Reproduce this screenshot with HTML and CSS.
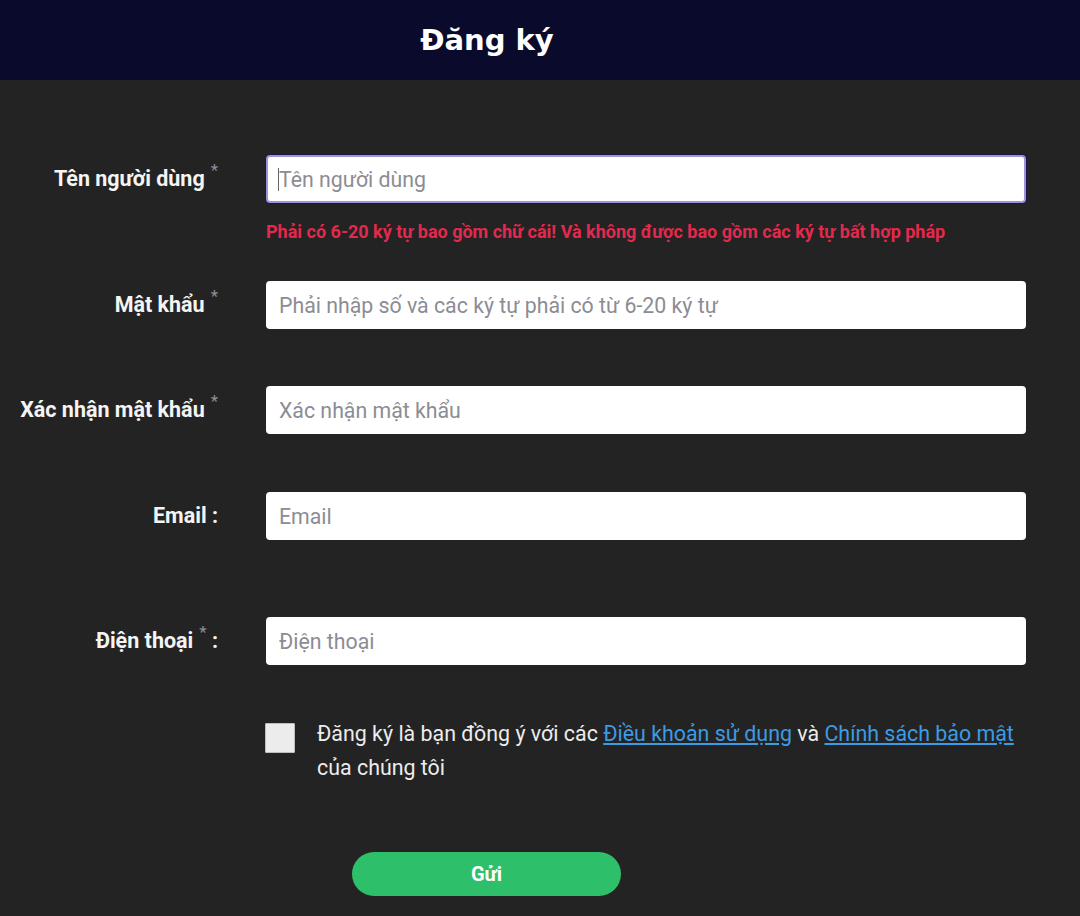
FILE: index.html
```html
<!DOCTYPE html>
<html lang="vi">
<head>
<meta charset="utf-8">
<title>Đăng ký</title>
<link rel="stylesheet" href="styles.css">
</head>
<body>
<header class="topbar">
  <h1 class="title">Đăng ký</h1>
</header>
<main class="form">
  <div class="row row-user">
    <label class="label">Tên người dùng<sup class="req">*</sup></label>
    <div class="field">
      <div class="input-wrap">
        <input class="input input-focus" type="text" placeholder="Tên người dùng">
        <span class="caret"></span>
      </div>
      <p class="error">Phải có 6-20 ký tự bao gồm chữ cái! Và không được bao gồm các ký tự bất hợp pháp</p>
    </div>
  </div>
  <div class="row row-pass">
    <label class="label">Mật khẩu<sup class="req">*</sup></label>
    <div class="field">
      <input class="input" type="password" placeholder="Phải nhập số và các ký tự phải có từ 6-20 ký tự">
    </div>
  </div>
  <div class="row row-confirm">
    <label class="label">Xác nhận mật khẩu<sup class="req">*</sup></label>
    <div class="field">
      <input class="input" type="password" placeholder="Xác nhận mật khẩu">
    </div>
  </div>
  <div class="row row-email">
    <label class="label">Email :</label>
    <div class="field">
      <input class="input" type="text" placeholder="Email">
    </div>
  </div>
  <div class="row row-phone">
    <label class="label">Điện thoại<sup class="req">*</sup> :</label>
    <div class="field">
      <input class="input" type="text" placeholder="Điện thoại">
    </div>
  </div>
  <div class="row row-agree">
    <span class="label"></span>
    <div class="field agree">
      <span class="checkbox"></span>
      <p class="agree-text"><span class="nowrap">Đăng ký là bạn đồng ý với các <a href="#" class="link">Điều khoản sử dụng</a> và <a href="#" class="link">Chính sách bảo mật</a></span><br>của chúng tôi</p>
    </div>
  </div>
  <div class="actions">
    <button class="submit" type="button">Gửi</button>
  </div>
</main>
</body>
</html>
```

FILE: styles.css
```css
* {
  box-sizing: border-box;
}

html, body {
  margin: 0;
  padding: 0;
}

body {
  background: #232323;
  font-family: Roboto, "Liberation Sans", Arial, sans-serif;
  color: #f2f2f2;
  min-height: 916px;
}

.topbar {
  height: 80px;
  background: #0a0b2c;
  display: flex;
  align-items: center;
  justify-content: center;
  padding-right: 106px;
}

.title {
  margin: 0;
  font-family: "DejaVu Sans", Verdana, sans-serif;
  font-size: 29px;
  font-weight: 700;
  color: #ffffff;
}

.form {
  padding-top: 75px;
}

.row {
  display: flex;
  align-items: flex-start;
  column-gap: 48px;
}

.label {
  width: 218px;
  flex: none;
  text-align: right;
  font-size: 21.5px;
  font-weight: 700;
  color: #f4f4f4;
  height: 48px;
  line-height: 48px;
  white-space: nowrap;
}

.req {
  color: #8e8e9c;
  font-size: 17px;
  font-weight: 400;
  margin-left: 6px;
  vertical-align: 10px;
  line-height: 0;
}

.field {
  width: 760px;
  flex: none;
}

.input-wrap {
  position: relative;
}

.input {
  display: block;
  width: 100%;
  height: 48px;
  border: none;
  border-radius: 4px;
  background: #ffffff;
  padding: 0 13px;
  font-family: Roboto, "Liberation Sans", Arial, sans-serif;
  font-size: 21.3px;
  color: #333;
  outline: none;
}

.input::placeholder {
  color: #8c8c94;
}

.input-focus {
  border: 2px solid #9d93dc;
  padding-left: 11px;
  box-shadow: 0 0 0 1px #1c1640;
}

.caret {
  position: absolute;
  left: 12px;
  top: 13px;
  width: 1px;
  height: 23px;
  background: #666;
}

.error {
  margin: 18px 0 0;
  font-size: 18px;
  line-height: 22px;
  font-weight: 700;
  color: #e3294d;
  white-space: nowrap;
}

.row-pass {
  margin-top: 38px;
}

.row-confirm {
  margin-top: 57px;
}

.row-email {
  margin-top: 58px;
}

.row-phone {
  margin-top: 77px;
}

.row-agree {
  margin-top: 52px;
}

.row-agree .label {
  height: auto;
}

.agree {
  display: flex;
  align-items: flex-start;
  column-gap: 22px;
}

.checkbox {
  flex: none;
  width: 30px;
  height: 30px;
  margin-top: 6px;
  margin-left: -1px;
  background: #ececec;
  border: 1px solid #bdbdbd;
  border-radius: 1px;
}

.agree-text {
  margin: 0;
  font-size: 21.4px;
  line-height: 34px;
  color: #ececec;
}

.nowrap {
  white-space: nowrap;
}

.link {
  color: #3b9be3;
  text-decoration: underline;
}

.actions {
  padding-left: 352px;
  margin-top: 67px;
}

.submit {
  width: 269px;
  height: 44px;
  border: none;
  border-radius: 22px;
  background: #2ebf6b;
  color: #ffffff;
  font-family: Roboto, "Liberation Sans", Arial, sans-serif;
  font-size: 20px;
  font-weight: 700;
  cursor: pointer;
}
```
